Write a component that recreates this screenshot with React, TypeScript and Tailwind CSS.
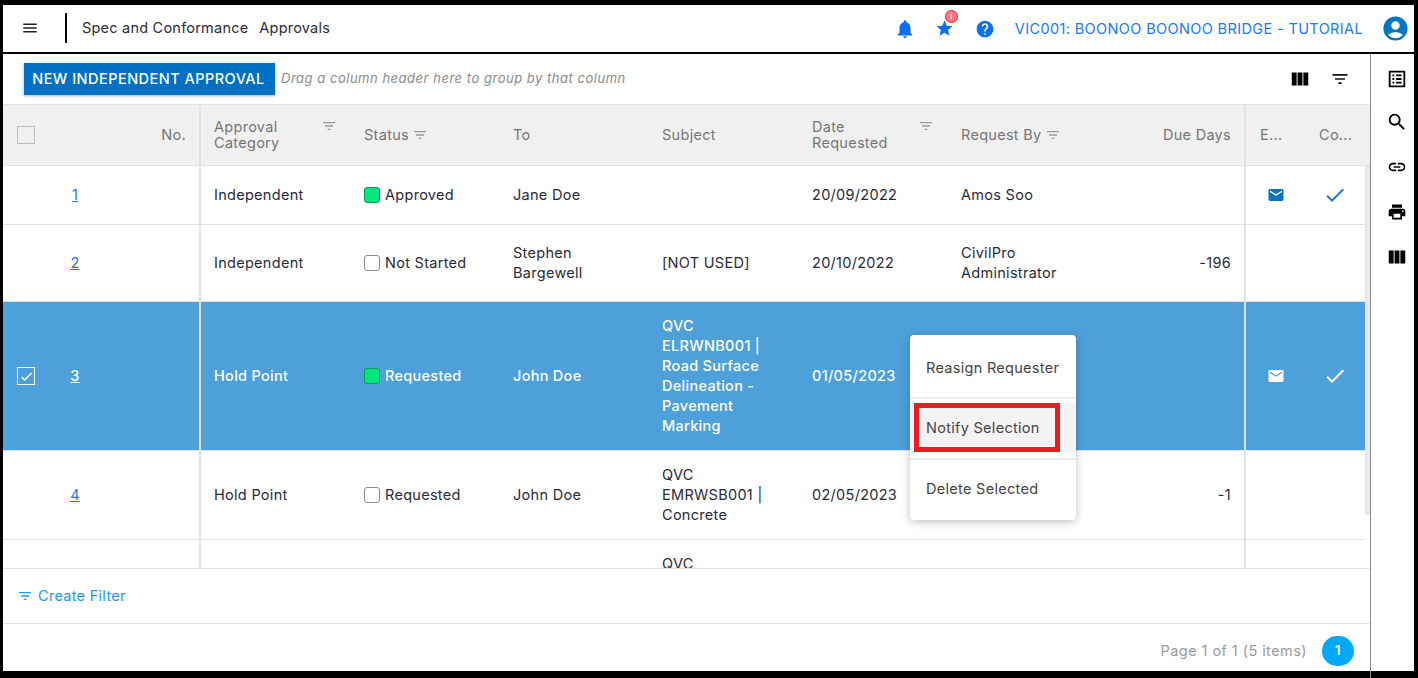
import React from "react";
import {
  MdMenu, MdNotifications, MdStar, MdHelp, MdAccountCircle, MdViewColumn, MdFilterList,
  MdOutlineListAlt, MdSearch, MdLink, MdPrint, MdEmail, MdCheck,
} from "react-icons/md";

const COLS = "grid grid-cols-[198px_150px_149px_149px_150px_149px_149px_149px_59px_60px]";

type Row = {
  no: string; cat: string; status: string; chip: "green" | "empty"; to: React.ReactNode;
  subject: React.ReactNode; date: string; by: React.ReactNode; due?: string; icons?: boolean;
  selected?: boolean; h: string;
};

const rows: Row[] = [
  { no: "1", cat: "Independent", status: "Approved", chip: "green", to: "Jane Doe", subject: "", date: "20/09/2022", by: "Amos Soo", icons: true, h: "h-[59px]" },
  { no: "2", cat: "Independent", status: "Not Started", chip: "empty", to: <>Stephen<br />Bargewell</>, subject: "[NOT USED]", date: "20/10/2022", by: <>CivilPro<br />Administrator</>, due: "-196", h: "h-[77px]" },
  { no: "3", cat: "Hold Point", status: "Requested", chip: "green", to: "John Doe", subject: <>QVC<br />ELRWNB001 |<br />Road Surface<br />Delineation -<br />Pavement<br />Marking</>, date: "01/05/2023", by: "", icons: true, selected: true, h: "h-[149px]" },
  { no: "4", cat: "Hold Point", status: "Requested", chip: "empty", to: "John Doe", subject: <>QVC<br />EMRWSB001 |<br />Concrete</>, date: "02/05/2023", by: "", due: "-1", h: "h-[89px]" },
  { no: "5", cat: "", status: "", chip: "empty", to: "", subject: <>QVC<br /><br /><br /></>, date: "", by: "", h: "h-[89px]" },
];

function HeadFilter({ className = "" }: { className?: string }) {
  return <MdFilterList size={16} className={`text-[#9a9a9a] shrink-0 ${className}`} />;
}

function TableRow({ r }: { r: Row }) {
  const base = r.selected ? "bg-[#4da0da] text-white font-medium" : "bg-white text-[#2a2a3a]";
  const link = r.selected ? "text-white" : "text-[#1a73e8]";
  const cell = "flex items-center pl-[13px] pr-[6px]";
  return (
    <div className={`${COLS} ${r.h} ${base} shrink-0 border-b border-[#e2e2e2] leading-5`}>
      <div className="flex items-center pl-[14px] border-r-2 border-[#e2e2e2]">
        <div className="w-[18px] h-[18px] flex items-center justify-center">
          {r.selected && (
            <span className="w-[18px] h-[18px] border border-white flex items-center justify-center">
              <MdCheck size={15} className="text-white" />
            </span>
          )}
        </div>
        {r.cat && <a className={`w-[80px] text-center underline ${link}`}>{r.no}</a>}
      </div>
      <div className={cell}>{r.cat}</div>
      <div className={cell}>
        {r.status && (
          <>
            <span className={`w-4 h-4 rounded-[3px] border mr-[5px] shrink-0 ${r.chip === "green" ? "bg-[#00e67c] border-[#0b9a5c]" : "bg-white border-[#8a8a8a]"}`} />
            {r.status}
          </>
        )}
      </div>
      <div className={cell}>{r.to}</div>
      <div className={cell}>
        <div>{r.subject}</div>
      </div>
      <div className={cell}>{r.date}</div>
      <div className={cell}>{r.by}</div>
      <div className="flex items-center justify-end pr-[13px] border-r-2 border-[#e2e2e2]">{r.due}</div>
      <div className="flex items-center justify-center">
        {r.icons && <MdEmail size={18} className={r.selected ? "text-white" : "text-[#0b74c9]"} />}
      </div>
      <div className="flex items-center justify-center">
        {r.icons && <MdCheck size={24} className={r.selected ? "text-white" : "text-[#1f78d1]"} />}
      </div>
    </div>
  );
}

export default function App() {
  return (
    <div className="relative w-[1418px] h-[678px] bg-white border-l-[3px] border-t-[5px] border-r-4 border-b-[7px] border-black flex flex-col font-[Inter,sans-serif] text-[14.5px] tracking-[0.02em]">
      {/* top bar */}
      <header className="h-[49px] shrink-0 border-b-2 border-black flex items-center justify-between">
        <div className="flex items-center text-[#2c2c3a] tracking-[0.015em] pb-[1px]">
          <MdMenu size={18} className="ml-[18px] text-[#222]" />
          <span className="ml-[26px] w-[2px] h-[30px] bg-black" />
          <span className="ml-[15px]">Spec and Conformance</span>
          <span className="ml-[11px]">Approvals</span>
        </div>
        <div className="flex items-center">
          <MdNotifications size={22} className="text-[#0b6ff2]" />
          <span className="relative ml-[19px] flex">
            <MdStar size={19} className="text-[#0b6ff2]" />
            <span className="absolute -top-[9px] left-[10px] w-[13px] h-[13px] rounded-full bg-[#ff7a7a] border border-[#e8202a] text-white text-[8px] leading-[11px] text-center tracking-normal">i</span>
          </span>
          <MdHelp size={20} className="ml-[21px] text-[#0b6ff2]" />
          <span className="ml-[20px] text-[#1a7af0] tracking-[0.0255em]">VIC001: BOONOO BOONOO BRIDGE - TUTORIAL</span>
          <MdAccountCircle size={29} className="ml-[18px] mr-[4px] text-[#0075c2]" />
        </div>
      </header>

      <div className="flex-1 flex min-h-0">
        {/* main column */}
        <main className="w-[1367px] flex flex-col">
          <div className="h-[50px] shrink-0 flex items-center pl-[21px] pr-[20px]">
            <button className="h-8 w-[251px] pr-[2px] bg-[#0070c4] text-white font-medium tracking-[0.032em] shadow-[0_1px_3px_rgba(0,0,0,0.3)] whitespace-nowrap">NEW INDEPENDENT APPROVAL</button>
            <span className="ml-[6px] italic text-[13px] tracking-[0.04em] text-[#8a8a8a]">Drag a column header here to group by that column</span>
            <div className="ml-auto flex items-center gap-[19px]">
              <MdViewColumn size={22} className="text-black" />
              <MdFilterList size={20} className="text-[#111]" />
            </div>
          </div>

          {/* table head */}
          <div className={`${COLS} pr-[5px] h-[62px] shrink-0 bg-[#f0f0f0] border-y border-[#e2e2e2] text-[#767676] leading-4`}>
            <div className="flex items-center justify-between pl-[14px] pr-[13px] border-r-2 border-[#e2e2e2]">
              <span className="w-[18px] h-[18px] border border-[#bdbdbd]" />
              <span>No.</span>
            </div>
            <div className="flex items-center justify-between pl-[13px] pr-[14px]">
              <span>Approval<br />Category</span>
              <HeadFilter className="self-start mt-[13px]" />
            </div>
            <div className="flex items-center pl-[13px] gap-[3px]">Status <HeadFilter /></div>
            <div className="flex items-center pl-[13px]">To</div>
            <div className="flex items-center pl-[13px]">Subject</div>
            <div className="flex items-center justify-between pl-[13px] pr-[14px]">
              <span>Date<br />Requested</span>
              <HeadFilter className="self-start mt-[13px]" />
            </div>
            <div className="flex items-center pl-[13px] gap-[3px]">Request By <HeadFilter /></div>
            <div className="flex items-center justify-end pr-[13px] border-r-2 border-[#e2e2e2]">Due Days</div>
            <div className="flex items-center pl-[14px]">E...</div>
            <div className="flex items-center pl-[14px]">Co...</div>
          </div>

          {/* table body */}
          <div className="h-[402px] shrink-0 flex overflow-hidden">
            <div className="w-[1362px] flex flex-col">
              {rows.map((r) => (
                <TableRow key={r.no} r={r} />
              ))}
            </div>
            <div className="w-[5px] h-[349px] bg-[#e8e8e8]" />
          </div>

          <div className="h-[56px] shrink-0 border-y border-[#e2e2e2] flex items-center pl-[14px] text-[#2196f3]">
            <MdFilterList size={16} />
            <span className="ml-[5px]">Create Filter</span>
          </div>

          <div className="flex-1 flex items-center justify-end pr-[16px] pt-[7px]">
            <span className="text-[#9a9a9a] tracking-[0.03em]">Page 1 of 1 (5 items)</span>
            <span className="ml-[15px] w-8 h-[30px] rounded-full bg-[#03a9f4] text-white text-[13px] font-semibold flex items-center justify-center">1</span>
          </div>
        </main>

        {/* right rail */}
        <aside className="flex-1 border-l border-[#8c8c8c] pl-[8px] pt-[3px] flex flex-col items-center text-black">
          <div className="h-[44.5px] flex items-center"><MdOutlineListAlt size={22} /></div>
          <div className="h-[44.5px] flex items-center"><MdSearch size={22} className="-mt-[3px]" /></div>
          <div className="h-[44.5px] flex items-center"><MdLink size={20} className="-mt-[2px]" /></div>
          <div className="h-[44.5px] flex items-center"><MdPrint size={20} className="-mt-[1px]" /></div>
          <div className="h-[44.5px] flex items-center"><MdViewColumn size={22} /></div>
        </aside>
      </div>

      {/* rail line running over the frame */}
      <span className="absolute left-[1367px] -bottom-[7px] w-px h-[7px] bg-[#8c8c8c]" />

      {/* context menu */}
      <div className="absolute left-[907px] top-[330px] w-[166px] h-[185px] bg-white rounded-[4px] shadow-[0_2px_8px_rgba(0,0,0,0.25)] text-[#444] flex flex-col">
        <div className="h-[64px] shrink-0 flex items-center pl-4 pt-[4px] border-b-2 border-[#ececec]">Reasign Requester</div>
        <div className="relative mt-[4px] h-[50px] shrink-0 bg-[#f4f4f4] flex items-center pl-4">
          Notify Selection
          <span className="absolute left-[4px] top-0 w-[146px] h-[49px] border-[5px] border-[#ed1c24]" />
        </div>
        <div className="mt-[5px] flex-1 flex items-center pl-4 pb-[2px] border-t-2 border-[#ececec]">Delete Selected</div>
      </div>
    </div>
  );
}
